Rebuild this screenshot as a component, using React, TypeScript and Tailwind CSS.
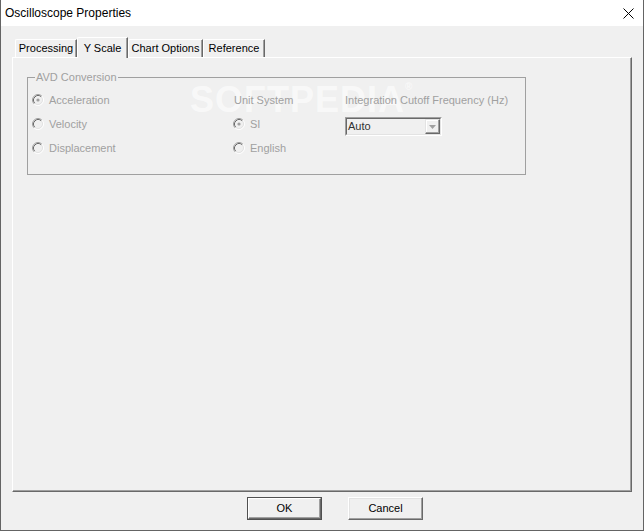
import React from "react";

const font = { fontFamily: '"Liberation Sans", Arial, sans-serif' };

function Radio({ checked }: { checked?: boolean }) {
  return (
    <svg width="12" height="12" viewBox="0 0 12 12" className="shrink-0">
      <circle cx="6" cy="6" r="4.5" fill="#f0f0f0" />
      <path d="M2.11 9.89 A5.5 5.5 0 0 1 9.89 2.11" stroke="#a0a0a0" strokeWidth="1" fill="none" />
      <path d="M9.89 2.11 A5.5 5.5 0 0 1 2.11 9.89" stroke="#ffffff" strokeWidth="1" fill="none" />
      <path d="M2.82 9.18 A4.5 4.5 0 0 1 9.18 2.82" stroke="#696969" strokeWidth="1" fill="none" />
      <path d="M9.18 2.82 A4.5 4.5 0 0 1 2.82 9.18" stroke="#e3e3e3" strokeWidth="1" fill="none" />
      {checked && <circle cx="6" cy="6" r="1.6" fill="#a0a0a0" />}
    </svg>
  );
}

function RadioRow({ label, checked }: { label: string; checked?: boolean }) {
  return (
    <div className="h-[24px] flex items-center gap-[5px]">
      <Radio checked={checked} />
      <span className="text-[#a0a0a0]">{label}</span>
    </div>
  );
}

export default function App() {
  return (
    <div
      className="w-[644px] h-[531px] flex flex-col border-l border-r border-b border-[#646464] bg-[#f0f0f0] text-[11px] text-black overflow-hidden"
      style={font}
    >
      {/* Title bar */}
      <div className="h-[26px] bg-white flex items-center justify-between pl-[4px] pr-[9px] shrink-0">
        <span className="text-[12px] leading-none">Oscilloscope Properties</span>
        <svg width="11" height="11" viewBox="0 0 11 11">
          <path d="M0.5 0.5 L10.5 10.5 M10.5 0.5 L0.5 10.5" stroke="#000" strokeWidth="1" />
        </svg>
      </div>

      {/* Body */}
      <div className="flex-1 flex flex-col pl-[11px] pt-[11px]">
        {/* Tabs */}
        <div className="h-[20px] flex items-end pl-[3px] relative z-10">
          <div className="w-[62px] h-[18px] flex items-center justify-center border-t border-l border-white border-r border-r-[#696969] shadow-[inset_-1px_0_0_#a0a0a0] rounded-tl-[2px]">
            Processing
          </div>
          <div className="w-[51px] h-[21px] mb-[-1px] bg-[#f0f0f0] flex items-start pt-[2px] justify-center border-t border-l border-white border-r border-r-[#696969] shadow-[inset_-1px_0_0_#a0a0a0] rounded-tl-[2px]">
            Y Scale
          </div>
          <div className="w-[75px] h-[18px] flex items-center justify-center border-t border-l border-white border-r border-r-[#696969] shadow-[inset_-1px_0_0_#a0a0a0] rounded-tl-[2px]">
            Chart Options
          </div>
          <div className="w-[62px] h-[18px] flex items-center justify-center border-t border-l border-white border-r border-r-[#696969] shadow-[inset_-1px_0_0_#a0a0a0] rounded-tl-[2px]">
            Reference
          </div>
        </div>

        {/* Panel */}
        <div className="w-[620px] h-[435px] border-t border-l border-white border-r border-b border-r-[#696969] border-b-[#696969] shadow-[inset_-1px_-1px_0_#a0a0a0] relative">
          {/* Watermark */}
          <div className="absolute left-[177px] top-[24px] text-[36px] font-bold text-white/60 tracking-[1px] pointer-events-none leading-none">
            SOFTPEDIA<span className="text-[10px] align-top">®</span>
          </div>

          {/* Group box */}
          <div className="ml-[14px] mt-[19px] w-[499px] h-[98px] border border-[#a0a0a0] relative">
            <div className="ml-[7px] -mt-[8px] h-[14px] px-[1px] w-fit bg-[#f0f0f0] text-[#a0a0a0] leading-[14px]">
              AVD Conversion
            </div>
            <div className="flex pl-[4px] mt-[4px]">
              <div className="w-[201px] flex flex-col">
                <RadioRow label="Acceleration" checked />
                <RadioRow label="Velocity" />
                <RadioRow label="Displacement" />
              </div>
              <div className="w-[112px] flex flex-col">
                <div className="h-[24px] flex items-center pl-[1px] text-[#a0a0a0]">Unit System</div>
                <RadioRow label="SI" checked />
                <RadioRow label="English" />
              </div>
              <div className="flex flex-col">
                <div className="h-[24px] flex items-center text-[#a0a0a0]">
                  Integration Cutoff Frequency (Hz)
                </div>
                <div className="mt-[5px] w-[97px] h-[19px] border border-t-[#a0a0a0] border-l-[#a0a0a0] border-r-white border-b-white">
                  <div className="h-full border border-t-[#696969] border-l-[#696969] border-r-[#e3e3e3] border-b-[#e3e3e3] flex items-center justify-between">
                    <span className="pl-[1px] text-[#303030]">Auto</span>
                    <div className="w-[15px] h-[15px] border border-t-[#e3e3e3] border-l-[#e3e3e3] border-r-[#696969] border-b-[#696969] shadow-[inset_-1px_-1px_0_#a0a0a0,inset_1px_1px_0_#ffffff] flex items-center justify-center">
                      <svg width="7" height="4" viewBox="0 0 7 4">
                        <path d="M0 0 H7 L3.5 4 Z" fill="#a0a0a0" />
                      </svg>
                    </div>
                  </div>
                </div>
              </div>
            </div>
          </div>
        </div>

        {/* Buttons */}
        <div className="flex mt-[5px] pl-[235px] gap-[26px]">
          <div className="w-[75px] h-[23px] border border-[#505050]">
            <div className="h-full border border-t-white border-l-white border-r-[#696969] border-b-[#696969] shadow-[inset_-1px_-1px_0_#a0a0a0] flex items-center justify-center">
              OK
            </div>
          </div>
          <div className="w-[75px] h-[23px] border border-t-white border-l-white border-r-[#696969] border-b-[#696969] shadow-[inset_-1px_-1px_0_#a0a0a0,inset_1px_1px_0_#e3e3e3] flex items-center justify-center">
            Cancel
          </div>
        </div>
      </div>
    </div>
  );
}
